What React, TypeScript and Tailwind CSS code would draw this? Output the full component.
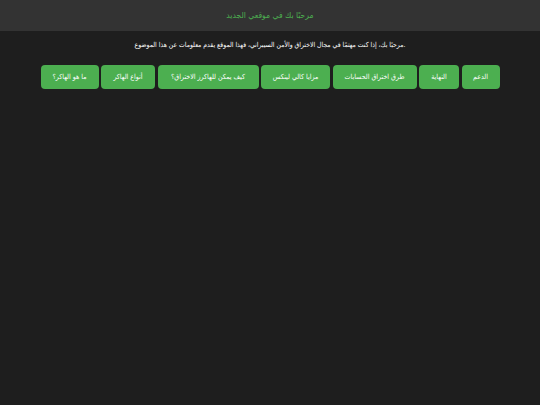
import React from "react";

const items = [
  { t: "ما هو الهاكر؟", w: "w-[58px]" },
  { t: "أنواع الهاكر", w: "w-[54px]" },
  { t: "كيف يمكن للهاكرز الاختراق؟", w: "w-[101px]" },
  { t: "مزايا كالي لينكس", w: "w-[69px]" },
  { t: "طرق اختراق الحسابات", w: "w-[84px]" },
  { t: "النهاية", w: "w-[40px]" },
  { t: "الدعم", w: "w-[38px]" },
];

export default function App() {
  return (
    <div className="min-h-[405px] w-full bg-[#1e1e1e] font-['DejaVu_Sans_Condensed','DejaVu_Sans',sans-serif] text-white">
      <header className="flex h-[31px] items-center justify-center bg-[#333333]">
        <h1 className="text-[8.5px] text-[#4caf50]">مرحبًا بك في موقعي الجديد</h1>
      </header>
      <p className="mt-[9px] text-center text-[6.8px] leading-[10px] text-white">
        مرحبًا بك، إذا كنت مهتمًا في مجال الاختراق والأمن السيبراني، فهذا الموقع يقدم معلومات عن هذا الموضوع.
      </p>
      <nav className="mt-[15px] flex justify-center gap-[2.5px]">
        {items.map((it) => (
          <button
            key={it.t}
            className={
              it.w +
              " flex h-[24px] items-center justify-center rounded-[4px] bg-[#4caf50] text-[7px] text-white"
            }
          >
            {it.t}
          </button>
        ))}
      </nav>
    </div>
  );
}
